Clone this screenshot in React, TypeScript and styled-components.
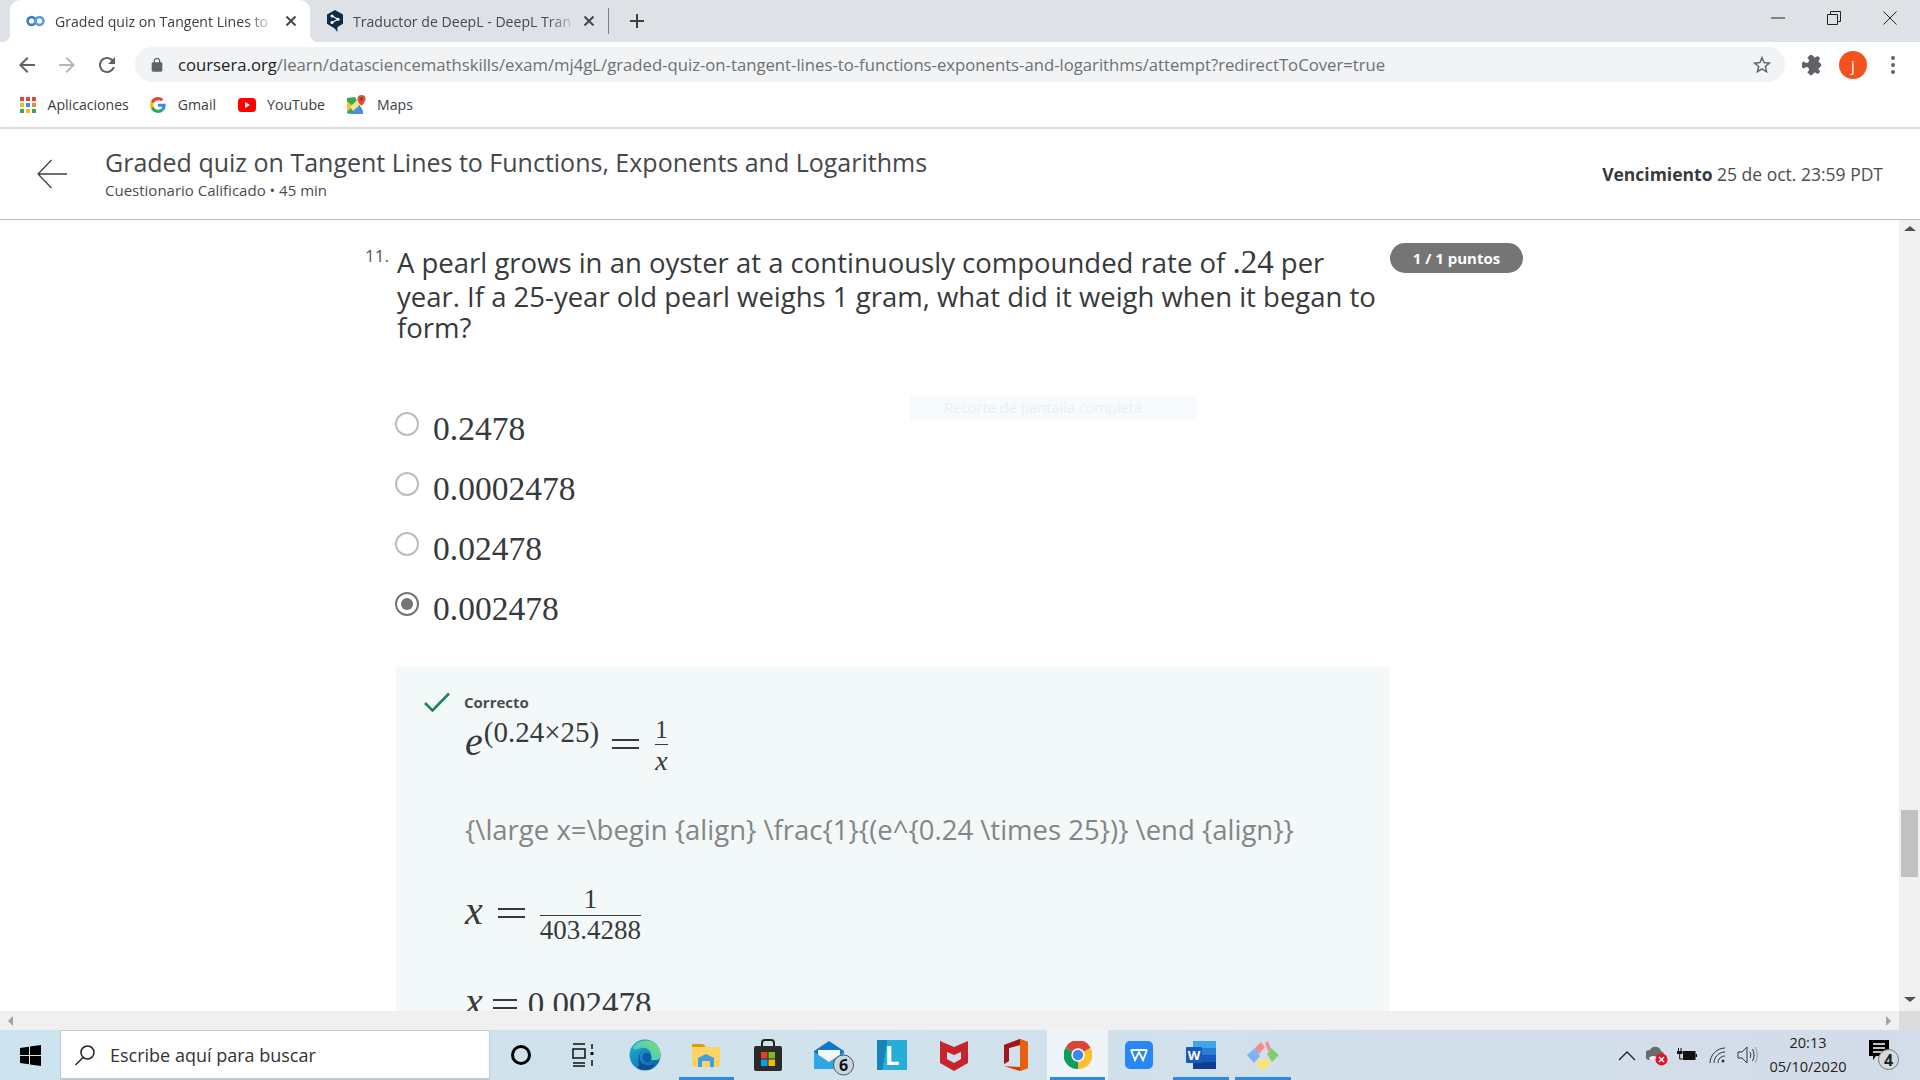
import React from 'react';
import styled, { createGlobalStyle } from 'styled-components';

const Global = createGlobalStyle`
  html, body { margin: 0; padding: 0; overflow: hidden; background: #fff; }
  body { font-family: "Open Sans", "Noto Sans", sans-serif; color: #373a3c; }
  * { box-sizing: border-box; }
`;

const Page = styled.div`
  width: 1920px; height: 1080px; display: flex; flex-direction: column; overflow: hidden;
`;
/* ---------- browser chrome ---------- */
const TabStrip = styled.div`
  height: 42px; flex: none; background: #dee1e6; display: flex; align-items: flex-end; padding-left: 10px;
`;
const Tab = styled.div<{ $active?: boolean }>`
  position: relative; width: ${p => (p.$active ? 300 : 298)}px; height: 42px;
  display: flex; align-items: center; padding: 0 14px 0 16px;
  gap: ${p => (p.$active ? 10 : 9)}px;
  background: ${p => (p.$active ? '#fff' : 'transparent')};
  border-radius: 10px 10px 0 0;
  ${p => (p.$active ? `
    &::before, &::after { content: ""; position: absolute; bottom: 0; width: 8px; height: 8px; }
    &::before { left: -8px; background: radial-gradient(circle at 0 0, #dee1e6 8px, #fff 8.5px); }
    &::after { right: -8px; background: radial-gradient(circle at 100% 0, #dee1e6 8px, #fff 8.5px); }
  ` : '')}
`;
const TabTitle = styled.span<{ $active?: boolean }>`
  flex: none; width: ${p => (p.$active ? 213 : 217)}px; white-space: nowrap; overflow: hidden; font-size: 14.1px;
  color: ${p => (p.$active ? '#3c4043' : '#45494d')};
  -webkit-mask-image: linear-gradient(90deg, #000 90%, rgba(0,0,0,.25));
  mask-image: linear-gradient(90deg, #000 90%, rgba(0,0,0,.25));
`;
const TabClose = styled.span`
  margin-left: auto; display: flex;
`;
const TabSep = styled.div`
  width: 1px; height: 26px; background: #7b7e82; margin: 0 0 8px 0; align-self: flex-end;
`;
const NewTab = styled.div`
  width: 56px; height: 42px; display: flex; align-items: center; justify-content: center;
`;
const WinControls = styled.div`
  margin-left: auto; display: flex; height: 42px; align-items: flex-start; padding-right: 2px;
`;
const WinBtn = styled.div`
  width: 56px; height: 36px; display: flex; align-items: center; justify-content: center;
`;
const Toolbar = styled.div`
  height: 42px; flex: none; background: #fff; display: flex; align-items: flex-start; padding: 5px 0 0 7px;
`;
const NavBtn = styled.div`
  width: 40px; height: 35px; display: flex; align-items: center; justify-content: center;
`;
const Omnibox = styled.div`
  width: 1650px; margin-left: 8px; height: 35px; border-radius: 18px; background: #f1f3f4;
  display: flex; align-items: center; padding: 0 12px 0 14px;
`;
const Url = styled.div`
  margin-left: 13px; font-size: 16.7px; color: #6c7074; white-space: nowrap; flex: 1;
  & b { font-weight: 400; color: #202124; }
`;
const ToolActions = styled.div`
  display: flex; align-items: center; height: 35px; padding-left: 8px;
`;
const ActionBtn = styled.div`
  width: 40px; height: 35px; display: flex; align-items: center; justify-content: center;
`;
const Avatar = styled.div`
  width: 28px; height: 28px; border-radius: 50%; background: #f4511e; color: #fff; font-size: 15px;
  display: flex; align-items: center; justify-content: center;
`;
const Bookmarks = styled.div`
  height: 45px; flex: none; background: #fff; border-bottom: 2px solid #dadce0;
  display: flex; align-items: center; padding: 0 0 2px 20px;
`;
const Bookmark = styled.div`
  display: flex; align-items: center; gap: 11.5px; font-size: 14.1px; color: #3c4043; margin-right: 21.5px;
`;
/* ---------- course header ---------- */
const CourseHeader = styled.header`
  height: 91px; flex: none; display: flex; align-items: center; border-bottom: 1px solid #bdbdbd;
  padding: 0 37px 0 37px; background: #fff;
`;
const HeadText = styled.div`
  margin-left: 38px; display: flex; flex-direction: column; padding-bottom: 2px;
`;
const CourseTitle = styled.div`
  font-size: 25px; line-height: 32px; color: #45484a;
`;
const CourseSub = styled.div`
  font-size: 15px; line-height: 20px; color: #4a4d4f; margin-top: 2px;
`;
const Due = styled.div`
  margin-left: auto; font-size: 17.5px; color: #4a4d4f;
  & b { font-weight: 700; color: #373a3c; }
`;
/* ---------- content ---------- */
const Body = styled.div`
  flex: 1; min-height: 0; display: flex;
`;
const Content = styled.main`
  position: relative; flex: 1; overflow: hidden; background: #fff; padding-top: 23px;
`;
const QuestionRow = styled.div`
  display: flex; align-items: flex-start; padding-left: 365px;
`;
const QNumber = styled.div`
  width: 32px; flex: none; font-size: 17px; line-height: 22px; color: #555; margin-top: 2px;
`;
const QText = styled.div`
  width: 993px; flex: none; padding: 4px 8px 0 0; font-size: 27.5px; line-height: 31px; color: #373a3c;
`;
const InlineMath = styled.span`
  display: inline-block; font-family: "Liberation Serif", serif; font-size: 33px; line-height: 31px; padding-bottom: 3px;
`;
const Badge = styled.div`
  flex: none; width: 133px; height: 30px; border-radius: 15px; background: #757575; color: #fff;
  font-size: 15px; font-weight: 700; display: flex; align-items: center; justify-content: center;
`;
const Options = styled.div`
  margin: 69px 0 0 395px; display: flex; flex-direction: column;
`;
const Option = styled.div`
  height: 60px; display: flex; align-items: flex-start;
`;
const Radio = styled.div<{ $checked?: boolean }>`
  width: 24px; height: 24px; border-radius: 50%; flex: none;
  border: 2.5px solid ${p => (p.$checked ? '#757575' : '#bdbdbd')};
  display: flex; align-items: center; justify-content: center;
  &::after { content: ""; width: 12px; height: 12px; border-radius: 50%; background: ${p => (p.$checked ? '#757575' : 'transparent')}; }
`;
const OptionText = styled.div`
  margin: -2px 0 0 14px; font-family: "Liberation Serif", serif; font-size: 33.5px; line-height: 38px; color: #373a3c;
`;
const Feedback = styled.section`
  margin: 15px 0 0 396px; width: 994px; height: 420px; background: #f3f9f8; padding-top: 23px;
`;
const CorrectRow = styled.div`
  display: flex; align-items: center; gap: 14px; padding-left: 28px; height: 24px;
`;
const CorrectLabel = styled.div`
  font-size: 15px; font-weight: 700; color: #4a4d4f;
`;
const MathBlock = styled.div`
  padding-left: 69px;
`;
const MathRow = styled.div<{ $h: number; $mt: number }>`
  height: ${p => p.$h}px; margin-top: ${p => p.$mt}px; white-space: nowrap; line-height: 40px;
  font-family: "Liberation Serif", serif; font-size: 33px; color: #373a3c;
`;
const Var = styled.span`
  font-style: italic; font-size: 40px;
`;
const Sup = styled.span`
  font-size: 29px; line-height: 0; vertical-align: 13px; margin-left: 1px;
`;
const Eq = styled.span<{ $w: number; $ml?: number; $mr?: number }>`
  display: inline-block; width: ${p => p.$w}px; height: 10px; vertical-align: 6px;
  margin: 0 ${p => p.$mr ?? 15}px 0 ${p => p.$ml ?? 13}px;
  border-top: 2px solid #373a3c; border-bottom: 2px solid #373a3c;
`;
const Frac = styled.span<{ $size: number; $drop: number }>`
  display: inline-block; text-align: center; font-size: ${p => p.$size}px; line-height: ${p => p.$size}px;
  vertical-align: ${p => -p.$drop}px;
`;
const FracTop = styled.span`
  display: block; padding-bottom: 2px; border-bottom: 1px solid #373a3c;
`;
const FracBottom = styled.span<{ $gap: number }>`
  display: block; padding-top: ${p => p.$gap}px;
`;
const FracVar = styled.i`
  font-size: 28px;
`;
const RawTex = styled.div`
  margin-top: 27px; font-size: 27.5px; line-height: 40px; color: #838685; white-space: nowrap; font-family: "Open Sans", sans-serif;
`;
const Toast = styled.div`
  position: absolute; left: 910px; top: 176px; width: 287px; height: 24px; background: #f6fbfe; color: #eaf0f3;
  font-size: 14.5px; line-height: 24px; padding-left: 34px;
`;
const VScroll = styled.div`
  width: 21px; flex: none; background: #f0f0f0; display: flex; flex-direction: column; align-items: center; justify-content: space-between; padding: 6px 0 9px;
`;
const Thumb = styled.div`
  width: 17px; height: 67px; background: #c1c1c1; margin-top: 564px; margin-bottom: 106px; flex: none;
`;
const Triangle = styled.div<{ $dir: 'up' | 'down' }>`
  width: 0; height: 0; border-left: 6px solid transparent; border-right: 6px solid transparent;
  ${p => (p.$dir === 'up' ? 'border-bottom: 5px solid #505050;' : 'border-top: 5px solid #505050;')}
`;
const HScroll = styled.div`
  height: 19px; flex: none; background: #f0f0f0; display: flex; align-items: center; justify-content: space-between; padding: 0 29px 0 8px;
  position: relative;
`;
const HArrow = styled.div<{ $dir: 'l' | 'r' }>`
  width: 0; height: 0; border-top: 5px solid transparent; border-bottom: 5px solid transparent;
  ${p => (p.$dir === 'l' ? 'border-right: 5px solid #a3a3a3;' : 'border-left: 5px solid #a3a3a3;')}
`;
const Corner = styled.div`
  position: absolute; right: 0; top: 0; width: 21px; height: 19px; background: #dcdcdc;
`;
/* ---------- taskbar ---------- */
const Taskbar = styled.footer`
  height: 50px; flex: none; display: flex; align-items: stretch;
  background: linear-gradient(90deg, #cde3ed 0%, #d0e2ec 45%, #d3dce9 100%);
`;
const StartBtn = styled.div`
  width: 60px; display: flex; align-items: center; justify-content: center; flex: none;
`;
const SearchBox = styled.div`
  width: 430px; flex: none; background: #fff; border: 1px solid #bfcbd1; border-bottom-width: 2px; display: flex; align-items: center;
  padding-left: 13px; gap: 14px; font-size: 18px; color: #333;
`;
const TaskBtn = styled.div<{ $open?: boolean; $focus?: boolean }>`
  position: relative; width: 61.85px; flex: none; display: flex; align-items: center; justify-content: center;
  background: ${p => (p.$focus ? 'rgba(255,255,255,.62)' : 'transparent')};
  ${p => (p.$open ? `&::after { content: ""; position: absolute; left: 3px; right: 3px; bottom: 0; height: 3px; background: #2a8ae8; }` : '')}
`;
const Tray = styled.div`
  margin-left: auto; display: flex; align-items: center; padding-right: 8px;
`;
const TrayIcon = styled.div`
  width: 30px; display: flex; align-items: center; justify-content: center;
`;
const Clock = styled.div`
  width: 88px; margin: 0 4px 0 2px; text-align: center; font-size: 14.5px; line-height: 24px; color: #222;
`;
const Notif = styled.div`
  width: 56px; display: flex; align-items: center; justify-content: center;
`;
const LLogo = styled.div`
  width: 30px; height: 30px; background: linear-gradient(100deg, #1585b8 30%, #26aed9 30%); color: #fff;
  font: 700 26px/30px "Open Sans", sans-serif; text-align: center;
`;

const Ic = ({ d, size = 24, fill = '#5f6368', rotate = 0 }: { d: string; size?: number; fill?: string; rotate?: number }) => (
  <svg width={size} height={size} viewBox="0 0 24 24"><path d={d} fill={fill} transform={`rotate(${rotate} 12 12)`} /></svg>
);
const BACK = 'M20 11H7.83l5.59-5.59L12 4l-8 8 8 8 1.41-1.41L7.83 13H20v-2z';
const FWD = 'M12 4l-1.41 1.41L16.17 11H4v2h12.17l-5.58 5.59L12 20l8-8z';
const RELOAD = 'M17.65 6.35C16.2 4.9 14.21 4 12 4c-4.42 0-7.99 3.58-7.99 8s3.57 8 7.99 8c3.73 0 6.84-2.55 7.73-6h-2.08c-.82 2.33-3.04 4-5.65 4-3.31 0-6-2.69-6-6s2.69-6 6-6c1.66 0 3.14.69 4.22 1.78L13 11h7V4l-2.35 2.35z';
const LOCK = 'M18 8h-1V6c0-2.76-2.24-5-5-5S7 3.24 7 6v2H6c-1.1 0-2 .9-2 2v10c0 1.1.9 2 2 2h12c1.1 0 2-.9 2-2V10c0-1.1-.9-2-2-2zM9 6c0-1.66 1.34-3 3-3s3 1.34 3 3v2H9V6z';
const STAR = 'M22 9.24l-7.19-.62L12 2 9.19 8.63 2 9.24l5.46 4.73L5.82 21 12 17.27 18.18 21l-1.63-7.03L22 9.24zM12 15.4l-3.76 2.27 1-4.28-3.32-2.88 4.38-.38L12 6.1l1.71 4.04 4.38.38-3.32 2.88 1 4.28L12 15.4z';
const PUZZLE = 'M20.5 11H19V7c0-1.1-.9-2-2-2h-4V3.5C13 2.12 11.88 1 10.5 1S8 2.12 8 3.5V5H4c-1.1 0-1.99.9-1.99 2v3.8H3.5c1.49 0 2.7 1.21 2.7 2.7s-1.21 2.7-2.7 2.7H2V20c0 1.1.9 2 2 2h3.8v-1.5c0-1.49 1.21-2.7 2.7-2.7 1.49 0 2.7 1.21 2.7 2.7V22H17c1.1 0 2-.9 2-2v-4h1.5c1.38 0 2.5-1.12 2.5-2.5S21.88 11 20.5 11z';

const CourseraIcon = () => (
  <svg width="19" height="12" viewBox="0 0 24 14" fill="none" strokeWidth="3.4">
    <circle cx="7" cy="7" r="5" stroke="#3f7fc1" />
    <circle cx="17" cy="7" r="5" stroke="#5b9fd8" />
  </svg>
);
const DeepLIcon = () => (
  <svg width="18" height="22" viewBox="0 0 18 22">
    <path d="M9 0l8 4.600v9.200l-5.500 3.200-.2 5-2.600-3.400L1 13.800V4.600z" fill="#0f2b46" />
    <circle cx="6" cy="6" r="1.500" fill="#fff" /><circle cx="12" cy="9.200" r="1.500" fill="#fff" /><circle cx="6" cy="12.500" r="1.500" fill="#fff" />
    <path d="M6 6l6 3.200L6 12.500" stroke="#fff" strokeWidth="1.100" fill="none" />
  </svg>
);
const CloseX = ({ c = '#45494d', s = 10, w = 2 }: { c?: string; s?: number; w?: number }) => (
  <svg width={s} height={s} viewBox="0 0 10 10"><path d="M.5.5l9 9M9.500.5l-9 9" stroke={c} strokeWidth={w} /></svg>
);
const AppsIcon = () => (
  <svg width="16" height="16" viewBox="0 0 16 16">
    {[['#ea4335', '#ea4335', '#ea4335'], ['#fbbc05', '#4285f4', '#ea8a35'], ['#34a853', '#fbbc05', '#34a853']].map((r, i) =>
      r.map((c, j) => <rect key={`${i}${j}`} x={j * 6} y={i * 6} width="4" height="4" fill={c} />))}
  </svg>
);
const GoogleG = () => (
  <svg width="16" height="16" viewBox="0 0 48 48">
    <path fill="#EA4335" d="M24 9.5c3.54 0 6.71 1.22 9.21 3.6l6.85-6.85C35.9 2.38 30.47 0 24 0 14.62 0 6.51 5.38 2.56 13.22l7.98 6.19C12.43 13.72 17.74 9.5 24 9.5z" />
    <path fill="#4285F4" d="M46.98 24.55c0-1.57-.15-3.09-.38-4.55H24v9.02h12.94c-.58 2.96-2.26 5.48-4.78 7.18l7.73 6c4.51-4.18 7.09-10.36 7.09-17.65z" />
    <path fill="#FBBC05" d="M10.53 28.59c-.48-1.45-.76-2.99-.76-4.59s.27-3.14.76-4.59l-7.98-6.19C.92 16.46 0 20.12 0 24c0 3.88.92 7.54 2.56 10.78l7.97-6.19z" />
    <path fill="#34A853" d="M24 48c6.48 0 11.93-2.13 15.89-5.81l-7.73-6c-2.15 1.45-4.92 2.3-8.16 2.3-6.26 0-11.57-4.22-13.47-9.91l-7.98 6.19C6.51 42.62 14.62 48 24 48z" />
  </svg>
);
const YouTubeIcon = () => (
  <svg width="18" height="14" viewBox="0 0 18 14">
    <rect width="18" height="14" rx="3.5" fill="#f00" /><path d="M7 4l5 3-5 3z" fill="#fff" />
  </svg>
);
const MapsIcon = () => (
  <svg width="19" height="19" viewBox="0 0 19 19">
    <path d="M0 3l8-1 8 14-13 3-3-1z" fill="#34a853" />
    <path d="M0 6l6 5-6 6z" fill="#fbc02d" />
    <path d="M4 19l6-8 6 5v3z" fill="#4a8cf0" />
    <path d="M3 12l9-9 3 5-9 8z" fill="#f2e394" />
    <path d="M14.500 0a4 4 0 0 1 4 4c0 3-4 7-4 7s-4-4-4-7a4 4 0 0 1 4-4z" fill="#dd4b3e" />
    <circle cx="14.500" cy="4" r="1.400" fill="#8c2b22" />
  </svg>
);
const BackLong = () => (
  <svg width="30" height="30" viewBox="0 0 30 30" fill="none" stroke="#3f4346" strokeWidth="1.300">
    <path d="M30 15H1M14.500 1L1 15l13.500 14" />
  </svg>
);
const Check = () => (
  <svg width="26" height="20" viewBox="0 0 26 20" fill="none"><path d="M1 11l7.500 7.500L25 1.500" stroke="#1f8354" strokeWidth="2.600" /></svg>
);
const WinLogo = () => (
  <svg width="21" height="21" viewBox="0 0 21 21"><path d="M0 3l9-1.300V10H0zM10 1.500L21 0v10H10zM0 11h9v8.300L0 18zM10 11h11v10l-11-1.500z" fill="#000" /></svg>
);
const SearchIcon = () => (
  <svg width="22" height="22" viewBox="0 0 22 22" fill="none" stroke="#222" strokeWidth="1.500"><circle cx="13.500" cy="8.500" r="6.500" /><path d="M9 13.500L1.500 21" /></svg>
);
const Cortana = () => (
  <svg width="22" height="22" viewBox="0 0 22 22"><circle cx="11" cy="11" r="8.500" fill="none" stroke="#000" strokeWidth="3" /></svg>
);
const TaskView = () => (
  <svg width="22" height="24" viewBox="0 0 22 24" fill="none" stroke="#111" strokeWidth="1.500"><path d="M1 1h12M1 23h12M1 20h12M1 6h12v9H1zM20 1v5M20 17v6" /><rect x="18.500" y="9" width="3" height="3" fill="#111" stroke="none" /></svg>
);
const Edge = () => (
  <svg width="32" height="32" viewBox="0 0 32 32">
    <defs><linearGradient id="eg" x1="0" y1="0" x2="1" y2="1"><stop offset="0" stopColor="#1fb4d8" /><stop offset="1" stopColor="#0c59a4" /></linearGradient>
      <linearGradient id="eg2" x1="0" y1="1" x2="1" y2="0"><stop offset="0" stopColor="#35c1f1" /><stop offset="1" stopColor="#7de06a" /></linearGradient></defs>
    <circle cx="16" cy="16" r="15.500" fill="url(#eg)" />
    <path d="M4 9C8 0 24-2 30 9c3 6 1 12-2 12H16c5 0 6-3 6-5 0-5-5-8-9-7C8 10 5 12 4 9z" fill="url(#eg2)" />
    <path d="M15 11c-5 2-6 9-2 13 3 3 9 3 13 1-3 6-13 8-18 3 5 1-3-13 7-17z" fill="#0c4f95" />
    <circle cx="18" cy="18.500" r="4.500" fill="#0d5aa6" />
  </svg>
);
const Folder = () => (
  <svg width="30" height="30" viewBox="0 0 30 30">
    <path d="M1 4h11l3 3H1z" fill="#d99e08" />
    <rect x="1" y="7" width="28" height="20" rx="1" fill="#fcd462" />
    <path d="M7 27v-9l8-4 8 4v9h-4v-6H11v6z" fill="#3da0e8" />
  </svg>
);
const Store = () => (
  <svg width="30" height="32" viewBox="0 0 30 32">
    <path d="M9 8V4a3 3 0 0 1 3-3h6a3 3 0 0 1 3 3v4" fill="none" stroke="#222" strokeWidth="2" />
    <rect x="1" y="7" width="28" height="25" rx="2" fill="#2b2b2b" />
    <rect x="8" y="13" width="6.500" height="6.500" fill="#e5431f" /><rect x="15.500" y="13" width="6.500" height="6.500" fill="#7cb927" />
    <rect x="8" y="20.500" width="6.500" height="6.500" fill="#02a3ee" /><rect x="15.500" y="20.500" width="6.500" height="6.500" fill="#fab800" />
  </svg>
);
const Mail = () => (
  <svg width="48" height="42" viewBox="0 0 48 42">
    <path d="M8 17L23 7l15 10v18H8z" fill="#1277c4" />
    <path d="M12 16h22v9l-11 6-11-6z" fill="#f4f7fa" />
    <path d="M8 18l15 10 15-10v17H8z" fill="#2fa6ea" />
    <circle cx="37.500" cy="31" r="10" fill="#c8d6de" stroke="#555" strokeWidth="1" />
    <text x="37.500" y="37" fontSize="16" fontWeight="700" textAnchor="middle" fontFamily="Open Sans, sans-serif" fill="#111">6</text>
  </svg>
);
const McAfee = () => (
  <svg width="28" height="32" viewBox="0 0 28 32">
    <path d="M0 2l14 6 14-6v22l-14 8-14-8zM7 13v7l7 4 7-4v-7l-7 3z" fill="#c5262c" fillRule="evenodd" />
  </svg>
);
const Office = () => (
  <svg width="24" height="32" viewBox="0 0 24 32">
    <path d="M0 6l16-6 8 3v26l-8 3-16-5 16 1V6l-11 3v13l-5 3z" fill="#d83b01" />
    <path d="M0 6l16-6v6L5 9v13l-5 3z" fill="#a0161e" />
    <path d="M16 0l8 3v26l-8 3z" fill="#e8600f" />
  </svg>
);
const ChromeLogo = () => (
  <svg width="28" height="28" viewBox="0 0 48 48">
    <path d="M24 24L2.500 12A24 24 0 0 1 45.500 12z" fill="#db4437" />
    <path d="M24 24L45.500 12A24 24 0 0 1 24 48z" fill="#fbc02d" />
    <path d="M24 24V48A24 24 0 0 1 2.500 12z" fill="#0f9d58" />
    <circle cx="24" cy="24" r="11.500" fill="#fff" /><circle cx="24" cy="24" r="9" fill="#4285f4" />
  </svg>
);
const Wps = () => (
  <svg width="28" height="28" viewBox="0 0 28 28">
    <rect width="28" height="28" rx="5" fill="#2a86f3" />
    <path d="M6 9h16M6 9l4 10 4-8 4 8 4-10" fill="none" stroke="#fff" strokeWidth="1.800" />
  </svg>
);
const Word = () => (
  <svg width="30" height="30" viewBox="0 0 30 30">
    <rect x="7" y="1" width="23" height="7" fill="#41a5ee" /><rect x="7" y="8" width="23" height="7" fill="#2b7cd3" />
    <rect x="7" y="15" width="23" height="7" fill="#185abd" /><rect x="7" y="22" width="23" height="7" fill="#103f91" />
    <rect y="7" width="16" height="16" rx="1" fill="#185abd" />
    <text x="8" y="20" fontSize="13" fontWeight="700" textAnchor="middle" fontFamily="Open Sans, sans-serif" fill="#fff">W</text>
  </svg>
);
const Gem = () => (
  <svg width="32" height="32" viewBox="0 0 32 32">
    <path d="M8 9l6-6 4 5-6 7z" fill="#f58c8c" /><path d="M18 4l3-2 3 8-3 2z" fill="#f58c8c" />
    <path d="M0 16l8-7 5 8-6 7z" fill="#7fb2f5" /><path d="M24 9l8 7-7 7-5-8z" fill="#7fd068" />
    <path d="M16 32l-7-7 5-6 2 3 2-3 6 5z" fill="#fde27a" />
  </svg>
);
const Caret = () => (
  <svg width="18" height="11" viewBox="0 0 18 11" fill="none" stroke="#222" strokeWidth="1.300"><path d="M1 10l8-8 8 8" /></svg>
);
const CloudErr = () => (
  <svg width="22" height="22" viewBox="0 0 22 22">
    <path d="M3 16a5 5 0 0 1 1-10 6 6 0 0 1 11 1 5 5 0 0 1 1 9z" fill="#6c6c6c" />
    <path d="M3 14c3-3 6-2 10 0v2H4z" fill="#eee" />
    <circle cx="15.500" cy="15.500" r="6" fill="#e81123" />
    <path d="M13 13l5 5M18 13l-5 5" stroke="#fff" strokeWidth="1.500" />
  </svg>
);
const Battery = () => (
  <svg width="20" height="14" viewBox="0 0 20 14">
    <path d="M1.500 0v3M4 0v3M2.700 6v5h3" stroke="#111" strokeWidth="1" fill="none" />
    <rect x="0" y="3" width="5.500" height="3" fill="#111" />
    <rect x="6" y="3" width="12.500" height="9" fill="#111" /><rect x="18.500" y="6" width="1.500" height="3" fill="#111" />
  </svg>
);
const Wifi = () => (
  <svg width="17" height="17" viewBox="0 0 17 17" fill="none" stroke="#333" strokeWidth="1"><path d="M1 16C1 8 8 1 16 1M5 16c0-6 5-11 11-11M9 16c0-4 3-7 7-7" /><circle cx="14" cy="14" r="1.500" fill="#333" stroke="none" /></svg>
);
const Speaker = () => (
  <svg width="21" height="21" viewBox="0 0 21 21" fill="none" stroke="#333" strokeWidth="1"><path d="M1 7h4l5-5v16l-5-5H1z" /><path d="M13 7c1 2 1 4 0 6" /><path d="M15.500 4c2 4 2 8 0 12" /><path d="M18 2c3 5 3 11 0 16" stroke="#999" /></svg>
);
const NotifIcon = () => (
  <svg width="32" height="32" viewBox="0 0 32 32">
    <path d="M1 1h20v16H8l-3 4v-4H1z" fill="#000" />
    <path d="M5 5h12M5 9h12M5 13h12" stroke="#fff" strokeWidth="1.300" />
    <circle cx="20.500" cy="20.500" r="10" fill="#d3dce3" stroke="#777" />
    <text x="20.500" y="26.500" fontSize="16" fontWeight="700" textAnchor="middle" fontFamily="Open Sans, sans-serif" fill="#222">4</text>
  </svg>
);

const options = ['0.2478', '0.0002478', '0.02478', '0.002478'];

export default function App() {
  return (
    <Page>
      <Global />
      <TabStrip>
        <Tab $active>
          <CourseraIcon />
          <TabTitle $active>Graded quiz on Tangent Lines to</TabTitle>
          <TabClose><CloseX /></TabClose>
        </Tab>
        <Tab>
          <DeepLIcon />
          <TabTitle>Traductor de DeepL - DeepL Tran</TabTitle>
          <TabClose><CloseX /></TabClose>
        </Tab>
        <TabSep />
        <NewTab>
          <svg width="14" height="14" viewBox="0 0 14 14"><path d="M7 0v14M0 7h14" stroke="#3c4043" strokeWidth="2" /></svg>
        </NewTab>
        <WinControls>
          <WinBtn><svg width="14" height="2" viewBox="0 0 14 2"><path d="M0 1h14" stroke="#222" /></svg></WinBtn>
          <WinBtn><svg width="14" height="14" viewBox="0 0 14 14" fill="none" stroke="#222"><path d="M.5 3.500h10v10H.5zM3.500 3V.5h10v10H11" /></svg></WinBtn>
          <WinBtn><svg width="14" height="14" viewBox="0 0 14 14"><path d="M.5.5l13 13M13.500.5l-13 13" stroke="#222" /></svg></WinBtn>
        </WinControls>
      </TabStrip>
      <Toolbar>
        <NavBtn><Ic d={BACK} /></NavBtn>
        <NavBtn><Ic d={FWD} fill="#b6b9bc" /></NavBtn>
        <NavBtn><Ic d={RELOAD} /></NavBtn>
        <Omnibox>
          <Ic d={LOCK} size={16} />
          <Url><b>coursera.org</b>/learn/datasciencemathskills/exam/mj4gL/graded-quiz-on-tangent-lines-to-functions-exponents-and-logarithms/attempt?redirectToCover=true</Url>
          <Ic d={STAR} size={22} />
        </Omnibox>
        <ToolActions>
          <ActionBtn><Ic d={PUZZLE} size={22} rotate={45} /></ActionBtn>
          <ActionBtn><Avatar>j</Avatar></ActionBtn>
          <ActionBtn>
            <svg width="6" height="20" viewBox="0 0 6 20" fill="#5f6368"><circle cx="3" cy="3" r="2" /><circle cx="3" cy="10" r="2" /><circle cx="3" cy="17" r="2" /></svg>
          </ActionBtn>
        </ToolActions>
      </Toolbar>
      <Bookmarks>
        <Bookmark><AppsIcon />Aplicaciones</Bookmark>
        <Bookmark><GoogleG />Gmail</Bookmark>
        <Bookmark><YouTubeIcon />YouTube</Bookmark>
        <Bookmark><MapsIcon />Maps</Bookmark>
      </Bookmarks>
      <CourseHeader>
        <BackLong />
        <HeadText>
          <CourseTitle>Graded quiz on Tangent Lines to Functions, Exponents and Logarithms</CourseTitle>
          <CourseSub>Cuestionario Calificado • 45 min</CourseSub>
        </HeadText>
        <Due><b>Vencimiento</b> 25 de oct. 23:59 PDT</Due>
      </CourseHeader>
      <Body>
        <Content>
          <QuestionRow>
            <QNumber>11.</QNumber>
            <QText>
              A pearl grows in an oyster at a continuously compounded rate of <InlineMath>.24</InlineMath> per year. If a 25-year old pearl weighs 1 gram, what did it weigh when it began to form?
            </QText>
            <Badge>1 / 1 puntos</Badge>
          </QuestionRow>
          <Options>
            {options.map((o, i) => (
              <Option key={o}>
                <Radio $checked={i === 3} />
                <OptionText>{o}</OptionText>
              </Option>
            ))}
          </Options>
          <Feedback>
            <CorrectRow><Check /><CorrectLabel>Correcto</CorrectLabel></CorrectRow>
            <MathBlock>
              <MathRow $h={66} $mt={3}>
                <Var>e</Var><Sup>(0.24×25)</Sup>
                <Eq $w={27} $mr={16} />
                <Frac $size={25} $drop={15}>
                  <FracTop>1</FracTop>
                  <FracBottom $gap={3}><FracVar>x</FracVar></FracBottom>
                </Frac>
              </MathRow>
              <RawTex>{'{\\large x=\\begin {align} \\frac{1}{(e^{0.24 \\times 25})} \\end {align}}'}</RawTex>
              <MathRow $h={66} $mt={36}>
                <Var>x</Var>
                <Eq $w={27} $ml={15} />
                <Frac $size={27} $drop={15}>
                  <FracTop>1</FracTop>
                  <FracBottom $gap={1}>403.4288</FracBottom>
                </Frac>
              </MathRow>
              <MathRow $h={40} $mt={30}>
                <Var>x</Var>
                <Eq $w={24} $ml={10} $mr={11} />
                0.002478
              </MathRow>
            </MathBlock>
          </Feedback>
          <Toast>Recorte de pantalla completa</Toast>
        </Content>
        <VScroll>
          <Triangle $dir="up" />
          <Thumb />
          <Triangle $dir="down" />
        </VScroll>
      </Body>
      <HScroll>
        <HArrow $dir="l" />
        <HArrow $dir="r" />
        <Corner />
      </HScroll>
      <Taskbar>
        <StartBtn><WinLogo /></StartBtn>
        <SearchBox><SearchIcon />Escribe aquí para buscar</SearchBox>
        <TaskBtn><Cortana /></TaskBtn>
        <TaskBtn><TaskView /></TaskBtn>
        <TaskBtn><Edge /></TaskBtn>
        <TaskBtn $open><Folder /></TaskBtn>
        <TaskBtn><Store /></TaskBtn>
        <TaskBtn><Mail /></TaskBtn>
        <TaskBtn><LLogo>L</LLogo></TaskBtn>
        <TaskBtn><McAfee /></TaskBtn>
        <TaskBtn><Office /></TaskBtn>
        <TaskBtn $open $focus><ChromeLogo /></TaskBtn>
        <TaskBtn><Wps /></TaskBtn>
        <TaskBtn $open><Word /></TaskBtn>
        <TaskBtn $open><Gem /></TaskBtn>
        <Tray>
          <TrayIcon><Caret /></TrayIcon>
          <TrayIcon><CloudErr /></TrayIcon>
          <TrayIcon><Battery /></TrayIcon>
          <TrayIcon><Wifi /></TrayIcon>
          <TrayIcon><Speaker /></TrayIcon>
          <Clock>20:13<br />05/10/2020</Clock>
          <Notif><NotifIcon /></Notif>
        </Tray>
      </Taskbar>
    </Page>
  );
}
